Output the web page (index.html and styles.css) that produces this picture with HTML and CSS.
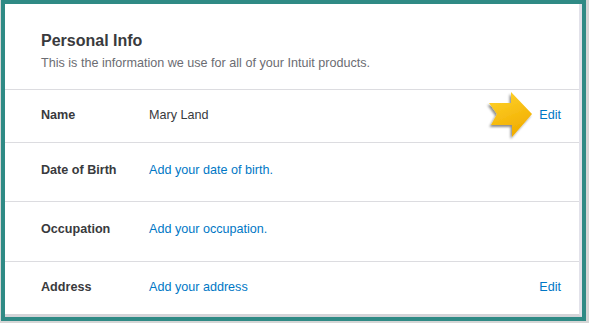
FILE: index.html
```html
<html>
  <head>
    <link rel="stylesheet" href="styles.css">
  </head>

  <body>
    <div class="frame">
      <section class="card">
        <header class="card-header">
          <h1>Personal Info</h1>
          <p>This is the information we use for all of your Intuit products.</p>
        </header>

        <div class="row">
          <div class="label">Name</div>
          <div class="value">Mary Land</div>
          <a class="edit" href="#">Edit</a>
          <svg class="callout" width="44" height="46" viewBox="0 0 44 46">
            <defs>
              <linearGradient id="gold" x1="0" y1="0" x2="0.4" y2="1">
                <stop offset="0" stop-color="#ffd52e" />
                <stop offset="1" stop-color="#f2ae00" />
              </linearGradient>
              <filter id="shade" x="-30%" y="-30%" width="160%" height="160%">
                <feDropShadow dx="-1.5" dy="2" stdDeviation="1.3" flood-color="#000" flood-opacity="0.45" />
              </filter>
            </defs>
            <polygon points="1,11 23,11 23,0 44,22 24,45 24,33 3,33 9,22" fill="url(#gold)" filter="url(#shade)" />
          </svg>
        </div>

        <div class="row row--tall">
          <div class="label">Date of Birth</div>
          <a class="value link" href="#">Add your date of birth.</a>
        </div>

        <div class="row row--tall">
          <div class="label">Occupation</div>
          <a class="value link" href="#">Add your occupation.</a>
        </div>

        <div class="row">
          <div class="label">Address</div>
          <a class="value link" href="#">Add your address</a>
          <a class="edit" href="#">Edit</a>
        </div>
      </section>
    </div>
  </body>
</html>
```

FILE: styles.css
```css
:root {
  --color-frame: #2f8a85;
  --color-text: #393a3d;
  --color-muted: #6b6c72;
  --color-link: #0077c5;
  --color-line: #dcdce0;
}

* {
  box-sizing: border-box;
}

body {
  margin: 0;
  height: 323px;
  background-color: #d6d6d6;
  font-family: 'Liberation Sans', Arial, sans-serif;
  color: var(--color-text);
  overflow: hidden;
}

.frame {
  margin: 0 3px 0 1px;
  height: 321px;
  border: 4px solid var(--color-frame);
}

.card {
  height: 100%;
  display: flex;
  flex-direction: column;
  background-color: #ffffff;
  border-right: 3px solid #e2e2ea;
  border-bottom: 3px solid #d4d4d8;
}

.card-header {
  padding: 27px 18px 18px 36px;
}

.card-header h1 {
  margin: 0;
  font-size: 16px;
  line-height: 20px;
  font-weight: 700;
}

.card-header p {
  margin: 4px 0 0;
  font-size: 12.6px;
  line-height: 16px;
  color: var(--color-muted);
}

.row {
  position: relative;
  display: flex;
  align-items: center;
  padding: 17px 18px 19px 36px;
  border-top: 1px solid var(--color-line);
  font-size: 12.6px;
  line-height: 16px;
}

.row--tall {
  padding-top: 19px;
  padding-bottom: 23px;
}

.row--tall + .row--tall {
  padding-bottom: 24px;
}

.label {
  width: 108px;
  font-weight: 700;
}

.value {
  flex: 1;
}

a {
  color: var(--color-link);
  text-decoration: none;
}

.edit {
  margin-left: auto;
}

.callout {
  position: absolute;
  top: 2px;
  right: 47px;
  overflow: visible;
}
```
